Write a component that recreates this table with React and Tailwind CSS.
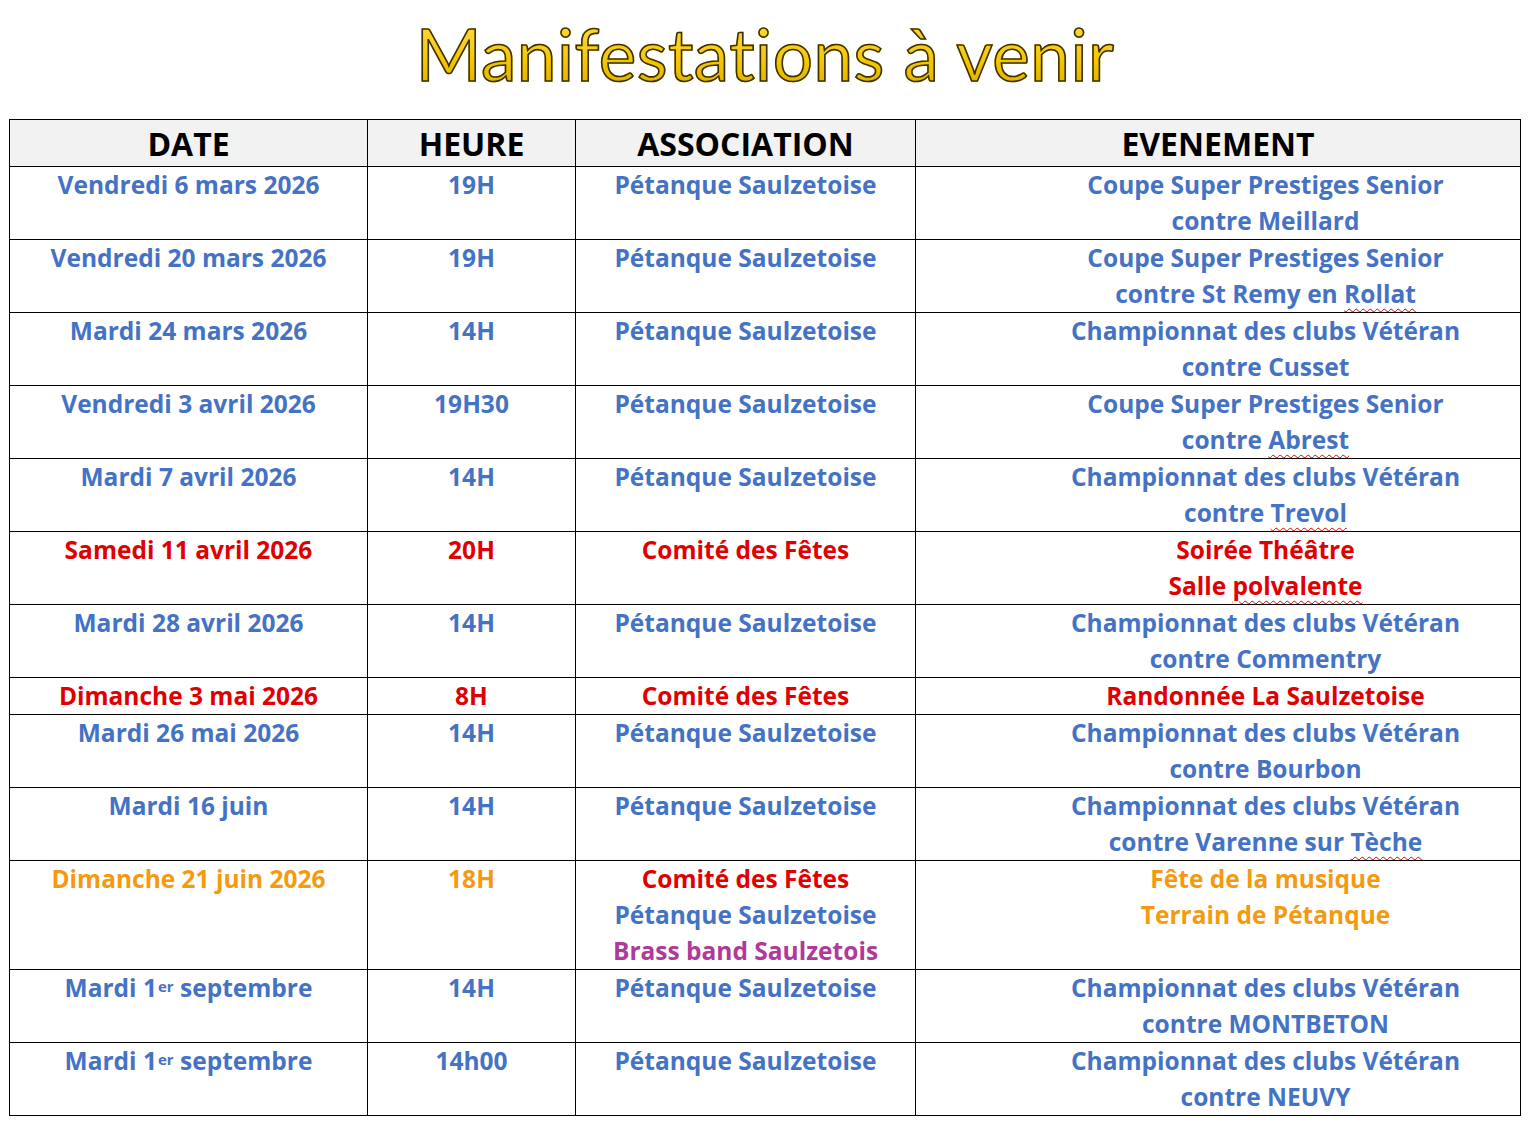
const BLUE = 'text-[#4472c4]'
const RED = 'text-[#e00000]'
const ORANGE = 'text-[#f59a0f]'
const PURPLE = 'text-[#b0399a]'

const Sq = ({ children }) => (
  <span className="underline decoration-wavy decoration-[#e00000] decoration-1 underline-offset-[5px]">{children}</span>
)

const Er = () => <sup className="text-[15px] relative -top-[5px] ml-[1px]">er</sup>

const rows = [
  { date: 'Vendredi 6 mars 2026', heure: '19H', assoc: [['Pétanque Saulzetoise', BLUE]], ev: ['Coupe Super Prestiges Senior', 'contre Meillard'], c: BLUE },
  { date: 'Vendredi 20 mars 2026', heure: '19H', assoc: [['Pétanque Saulzetoise', BLUE]], ev: ['Coupe Super Prestiges Senior', <>contre St Remy en <Sq>Rollat</Sq></>], c: BLUE },
  { date: 'Mardi 24 mars 2026', heure: '14H', assoc: [['Pétanque Saulzetoise', BLUE]], ev: ['Championnat des clubs Vétéran', 'contre Cusset'], c: BLUE },
  { date: 'Vendredi 3 avril 2026', heure: '19H30', assoc: [['Pétanque Saulzetoise', BLUE]], ev: ['Coupe Super Prestiges Senior', <>contre <Sq>Abrest</Sq></>], c: BLUE },
  { date: 'Mardi 7 avril 2026', heure: '14H', assoc: [['Pétanque Saulzetoise', BLUE]], ev: ['Championnat des clubs Vétéran', <>contre <Sq>Trevol</Sq></>], c: BLUE },
  { date: 'Samedi 11 avril 2026', heure: '20H', assoc: [['Comité des Fêtes', RED]], ev: ['Soirée Théâtre', <>Salle <Sq>polvalente</Sq></>], c: RED },
  { date: 'Mardi 28 avril 2026', heure: '14H', assoc: [['Pétanque Saulzetoise', BLUE]], ev: ['Championnat des clubs Vétéran', 'contre Commentry'], c: BLUE },
  { date: 'Dimanche 3 mai 2026', heure: '8H', assoc: [['Comité des Fêtes', RED]], ev: ['Randonnée La Saulzetoise'], c: RED },
  { date: 'Mardi 26 mai 2026', heure: '14H', assoc: [['Pétanque Saulzetoise', BLUE]], ev: ['Championnat des clubs Vétéran', 'contre Bourbon'], c: BLUE },
  { date: 'Mardi 16 juin', heure: '14H', assoc: [['Pétanque Saulzetoise', BLUE]], ev: ['Championnat des clubs Vétéran', <>contre Varenne sur <Sq>Tèche</Sq></>], c: BLUE },
  {
    date: 'Dimanche 21 juin 2026', heure: '18H',
    assoc: [['Comité des Fêtes', RED], ['Pétanque Saulzetoise', BLUE], ['Brass band Saulzetois', PURPLE]],
    ev: ['Fête de la musique', 'Terrain de Pétanque'], c: ORANGE,
  },
  { date: <>Mardi 1<Er /> septembre</>, heure: '14H', assoc: [['Pétanque Saulzetoise', BLUE]], ev: ['Championnat des clubs Vétéran', 'contre MONTBETON'], c: BLUE },
  { date: <>Mardi 1<Er /> septembre</>, heure: '14h00', assoc: [['Pétanque Saulzetoise', BLUE]], ev: ['Championnat des clubs Vétéran', 'contre NEUVY'], c: BLUE },
]

export default function App() {
  return (
    <div className="w-[1530px] h-[1122px] bg-white font-['Open_Sans',sans-serif] font-bold">
      <h1 className="h-[119px] pt-[12px] text-center text-[71px] leading-[84px] font-normal font-['Lato',sans-serif] [font-variant-ligatures:none] tracking-[0.5px] bg-gradient-to-b from-[#ffe34a] via-[#f5c800] to-[#c89800] bg-clip-text text-transparent [-webkit-text-stroke:1.6px_#3d3000]">
        Manifestations à venir
      </h1>
      <table className="ml-[9px] w-[1511px] border-collapse table-fixed">
        <colgroup>
          <col className="w-[358px]" />
          <col className="w-[208px]" />
          <col className="w-[340px]" />
          <col className="w-[605px]" />
        </colgroup>
        <thead>
          <tr className="bg-[#f2f2f2] h-[47px]">
            {['DATE', 'HEURE', 'ASSOCIATION', 'EVENEMENT'].map((h) => (
              <th key={h} className="border border-black text-black text-[32px] leading-[44px] font-bold pt-[2px] text-center align-middle">
                {h}
              </th>
            ))}
          </tr>
        </thead>
        <tbody className="text-[24.5px] leading-[36px] text-center">
          {rows.map((r, i) => (
            <tr key={i}>
              <td className={`border border-black align-top ${r.c}`}>
                <div className="min-h-[36px]">{r.date}</div>
                {r.ev.length > 1 && r.assoc.length < 2 && <div className="h-[36px]" />}
              </td>
              <td className={`border border-black align-top ${r.c}`}>{r.heure}</td>
              <td className="border border-black align-top">
                {r.assoc.map(([t, col], j) => (
                  <div key={j} className={col}>{t}</div>
                ))}
              </td>
              <td className={`border border-black align-top pl-[95px] ${r.c}`}>
                {r.ev.map((e, j) => (
                  <div key={j}>{e}</div>
                ))}
              </td>
            </tr>
          ))}
        </tbody>
      </table>
    </div>
  )
}
